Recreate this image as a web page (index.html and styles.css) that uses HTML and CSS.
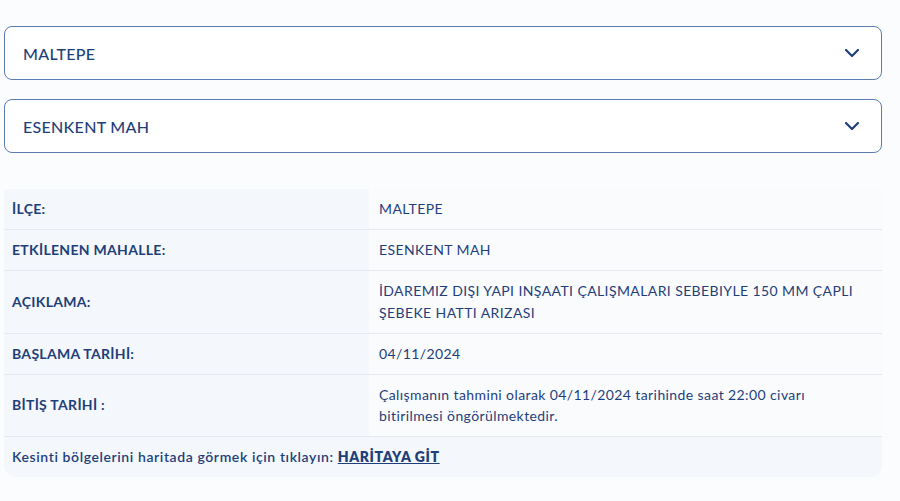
FILE: index.html
```html
<!DOCTYPE html>
<html lang="tr">
<head>
    <meta charset="UTF-8">
    <meta name="viewport" content="width=device-width, initial-scale=1.0">
    <title>Arıza Kesinti Bilgisi</title>
    <link rel="stylesheet" href="styles.css">
</head>
<body>
    <div class="page">
        <div class="select">
            <span>MALTEPE</span>
            <svg class="chevron" width="16" height="10" viewBox="0 0 16 10"><path d="M2 2l6 6 6-6" fill="none" stroke="#1e3f7a" stroke-width="2.2" stroke-linecap="round" stroke-linejoin="round"/></svg>
        </div>
        <div class="select">
            <span>ESENKENT MAH</span>
            <svg class="chevron" width="16" height="10" viewBox="0 0 16 10"><path d="M2 2l6 6 6-6" fill="none" stroke="#1e3f7a" stroke-width="2.2" stroke-linecap="round" stroke-linejoin="round"/></svg>
        </div>

        <div class="card">
            <table class="info">
                <tr>
                    <th>İLÇE:</th>
                    <td>MALTEPE</td>
                </tr>
                <tr>
                    <th>ETKİLENEN MAHALLE:</th>
                    <td>ESENKENT MAH</td>
                </tr>
                <tr>
                    <th>AÇIKLAMA:</th>
                    <td>İDAREMIZ DIŞI YAPI INŞAATI ÇALIŞMALARI SEBEBIYLE 150 MM ÇAPLI ŞEBEKE HATTI ARIZASI</td>
                </tr>
                <tr>
                    <th>BAŞLAMA TARİHİ:</th>
                    <td>04/11/2024</td>
                </tr>
                <tr>
                    <th>BİTİŞ TARİHİ :</th>
                    <td>Çalışmanın tahmini olarak 04/11/2024 tarihinde saat 22:00 civarı bitirilmesi öngörülmektedir.</td>
                </tr>
            </table>
            <div class="map-link">Kesinti bölgelerini haritada görmek için tıklayın: <a href="#">HARİTAYA GİT</a></div>
        </div>
    </div>
</body>
</html>
```

FILE: styles.css
```css
body {
    margin: 0;
    background: #fbfcfe;
    font-family: Lato, "Noto Sans", sans-serif;
    color: #1e3f7a;
}
.page {
    width: 878px;
    padding: 26px 0 0 4px;
}
.select {
    display: flex;
    align-items: center;
    justify-content: space-between;
    height: 52px;
    padding: 0 21px 0 18px;
    margin-bottom: 19px;
    background: #fff;
    border: 1px solid #5b7cb1;
    border-radius: 8px;
    font-size: 16px;
    font-weight: 500;
    letter-spacing: 0.3px;
}
.chevron {
    display: block;
}
.card {
    margin-top: 36px;
    background: #f4f7fb;
    border-radius: 0 0 12px 12px;
    overflow: hidden;
}
.info {
    width: 100%;
    border-collapse: collapse;
    font-size: 14px;
    line-height: 21.5px;
}
.info th,
.info td {
    padding: 9px 10px 9.5px 8px;
    text-align: left;
    vertical-align: middle;
    border-bottom: 1px solid #e5e9ef;
}
.info th {
    width: 347px;
    font-weight: 700;
    letter-spacing: 0.3px;
    background: #f4f7fb;
}
.info td {
    padding-left: 10px;
    padding-right: 20px;
    font-weight: 400;
    letter-spacing: 0.4px;
    background: #fafbfd;
}
.map-link {
    padding: 10px 8px 10px;
    font-size: 14px;
    line-height: 20px;
    font-weight: 600;
    letter-spacing: 0.6px;
}
.map-link a {
    color: #1e3f7a;
    font-weight: 800;
}
```
